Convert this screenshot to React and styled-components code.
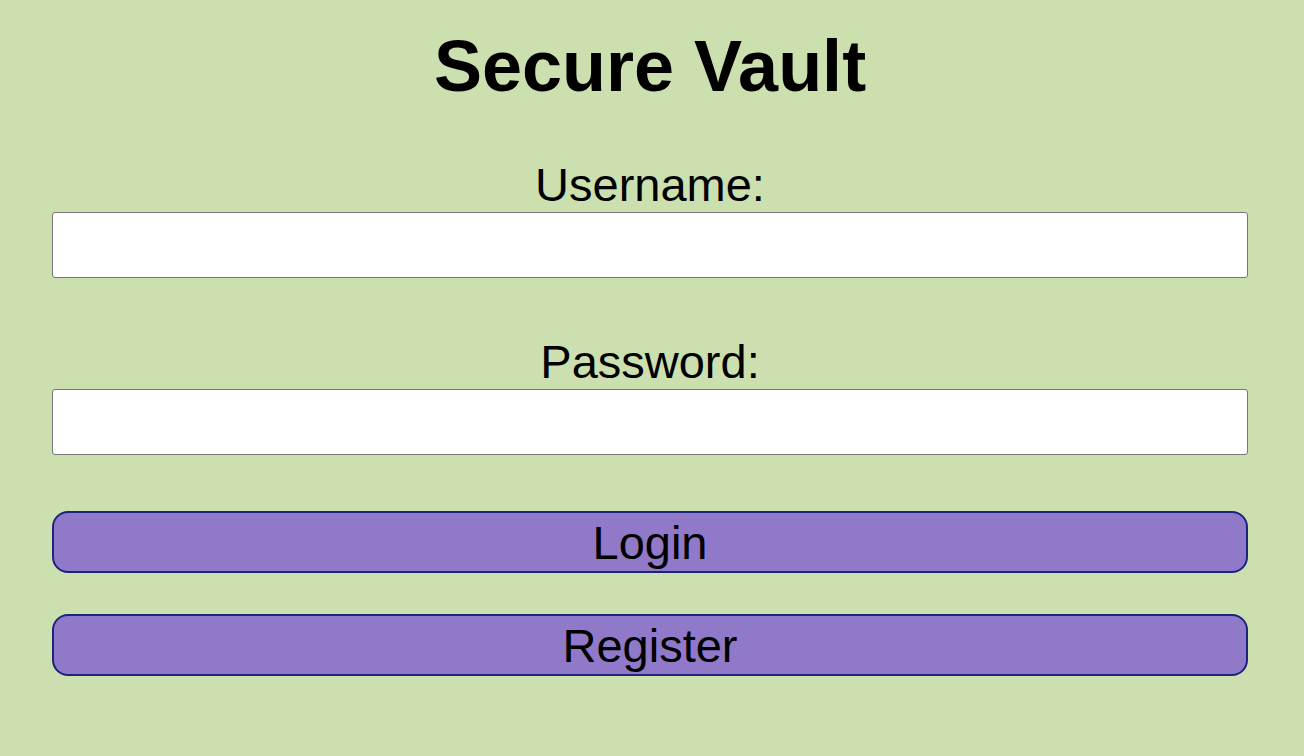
import React from "react";
import styled, { createGlobalStyle } from "styled-components";

const GlobalStyle = createGlobalStyle`
  html, body {
    margin: 0;
    padding: 0;
    background: #cce0af;
  }
  body {
    font-family: "Liberation Sans", Arial, Helvetica, sans-serif;
    color: #000;
  }
  * { box-sizing: border-box; }
`;

const Page = styled.div`
  min-height: 756px;
  padding: 25px 56px 0 52px;
  display: flex;
  flex-direction: column;
`;

const Title = styled.h1`
  margin: 0;
  font-size: 72px;
  line-height: 83px;
  font-weight: 700;
  text-align: center;
`;

const Form = styled.form`
  margin-top: 49px;
  display: flex;
  flex-direction: column;
`;

const Field = styled.div`
  display: flex;
  flex-direction: column;
  margin-top: ${(p) => p.$gap || 0}px;
`;

const Label = styled.label`
  display: block;
  font-size: 47px;
  line-height: 55px;
  text-align: center;
`;

const Input = styled.input`
  width: 100%;
  height: 66px;
  margin: 0;
  border: 1px solid #767676;
  border-radius: 3px;
  background: #fff;
  font-family: inherit;
  font-size: 24px;
  padding: 0 12px;
  outline: none;
`;

const Button = styled.button`
  width: 100%;
  height: 62px;
  margin: ${(p) => p.$gap || 0}px 0 0;
  padding: 0;
  border: 2px solid #1c2380;
  border-radius: 16px;
  background: #8f79c8;
  color: #000;
  font-family: inherit;
  font-size: 47px;
  line-height: 1;
  display: flex;
  align-items: center;
  justify-content: center;
  cursor: pointer;
`;

export default function App() {
  return (
    <>
      <GlobalStyle />
      <Page>
        <Title>Secure Vault</Title>
        <Form onSubmit={(e) => e.preventDefault()}>
          <Field>
            <Label htmlFor="username">Username:</Label>
            <Input id="username" type="text" />
          </Field>
          <Field $gap={56}>
            <Label htmlFor="password">Password:</Label>
            <Input id="password" type="password" />
          </Field>
          <Button type="submit" $gap={56}>Login</Button>
          <Button type="button" $gap={41}>Register</Button>
        </Form>
      </Page>
    </>
  );
}
